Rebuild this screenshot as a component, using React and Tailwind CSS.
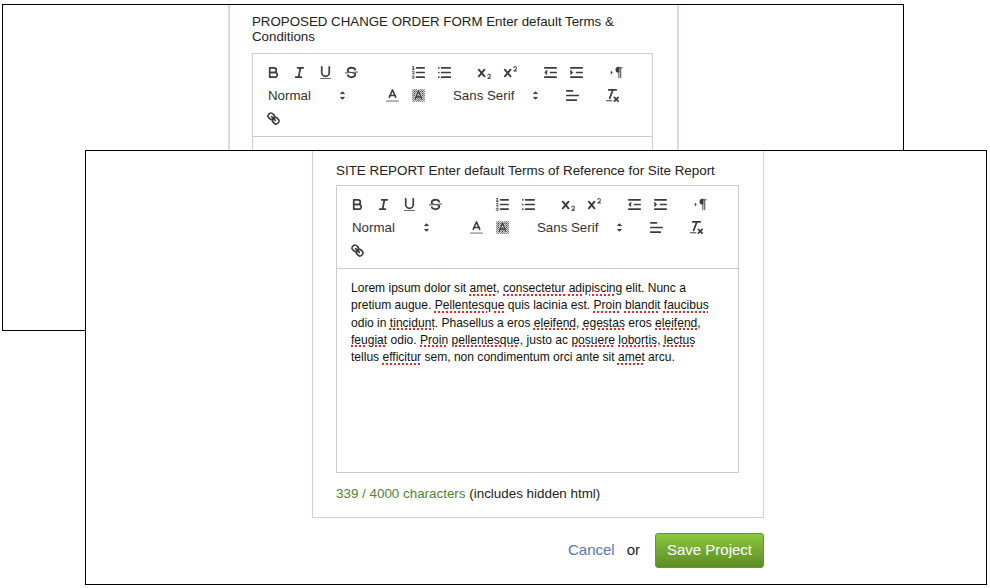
const S = ({ children, className = "" }) => (
  <svg viewBox="0 0 18 18" className={"w-[17px] h-[17px] " + className} fill="none" stroke="#3c3c3c" strokeWidth="1.8" strokeLinecap="round" strokeLinejoin="round">
    {children}
  </svg>
);

const Btn = ({ children, className = "" }) => (
  <span className={"w-[26px] h-[23px] flex items-center justify-center shrink-0 " + className}>{children}</span>
);

const F = { fill: "#3c3c3c", stroke: "none" };
const X = "M9.65,5.241a1,1,0,0,0-1.409.108L6,7.964,3.759,5.349A1,1,0,0,0,2.192,6.59178Q2.21541,6.6213,2.241,6.649L4.684,9.5,2.241,12.35A1,1,0,0,0,3.71,13.70722q0.02557-.02768.049-0.05722L6,11.036,8.241,13.65a1,1,0,1,0,1.567-1.24277Q9.78459,12.3777,9.759,12.35L7.316,9.5,9.759,6.651A1,1,0,0,0,9.65,5.241Z";

const Arrow = () => (
  <svg viewBox="0 0 18 18" className="w-[17px] h-[17px]" fill="#3c3c3c" stroke="#3c3c3c" strokeWidth="1" strokeLinejoin="round">
    <polygon points="7 11 9 13 11 11 7 11" />
    <polygon points="7 7 9 5 11 7 7 7" />
  </svg>
);

const Picker = ({ label, className = "" }) => (
  <span className={"h-[23px] flex items-center justify-between pl-[8px] text-[#333] text-[13.3px] shrink-0 " + className}>
    <span>{label}</span>
    <Arrow />
  </span>
);

function Toolbar({ id }) {
  return (
    <div className="flex flex-wrap content-start h-[83px] pl-[7px] pr-[4px] pt-[7px] border-b border-[#ccc]">
      <Btn><S><path d="M5,4H9.5A2.5,2.5,0,0,1,12,6.5v0A2.5,2.5,0,0,1,9.5,9H5A0,0,0,0,1,5,9V4A0,0,0,0,1,5,4Z" /><path d="M5,9h5.5A2.5,2.5,0,0,1,13,11.5v0A2.5,2.5,0,0,1,10.5,14H5a0,0,0,0,1,0,0V9A0,0,0,0,1,5,9Z" /></S></Btn>
      <Btn><S><line x1="7" x2="13" y1="4" y2="4" /><line x1="5" x2="11" y1="14" y2="14" /><line x1="8" x2="10" y1="14" y2="4" /></S></Btn>
      <Btn><S><path d="M5,3V9a4.012,4.012,0,0,0,4,4H9a4.012,4.012,0,0,0,4-4V3" /><rect {...F} height="1" rx=".5" ry=".5" width="12" x="3" y="15" /></S></Btn>
      <Btn><S><line strokeWidth="1" x1="15.5" x2="2.5" y1="8.5" y2="9.5" /><path {...F} d="M9.007,8C6.542,7.791,6,7.519,6,6.5,6,5.792,7.283,5,9,5c1.571,0,2.765.679,2.969,1.309a1,1,0,0,0,1.9-.617C13.356,4.106,11.354,3,9,3,6.2,3,4,4.538,4,6.5a3.2,3.2,0,0,0,.5,1.843Z" /><path {...F} d="M8.984,10C11.457,10.208,12,10.479,12,11.5c0,.708-1.283,1.5-3,1.5-1.571,0-2.765-.679-2.969-1.309a1,1,0,1,0-1.9.617C4.644,13.894,6.646,15,9,15c2.8,0,5-1.538,5-3.5a3.2,3.2,0,0,0-.5-1.843Z" /></S></Btn>

      <Btn className="ml-[41px]"><S><line x1="7" x2="15" y1="4" y2="4" /><line x1="7" x2="15" y1="9" y2="9" /><line x1="7" x2="15" y1="14" y2="14" /><line strokeWidth="1" x1="2.5" x2="4.5" y1="5.5" y2="5.5" /><path {...F} d="M3.5,6A0.5,0.5,0,0,1,3,5.5V3.085l-0.276.138A0.5,0.5,0,0,1,2.053,3c-0.124-.247-0.023-0.324.224-0.447l1-.5A0.5,0.5,0,0,1,4,2.5v3A0.5,0.5,0,0,1,3.5,6Z" /><path strokeWidth="1" d="M4.5,10.5h-2c0-.234,1.85-1.076,1.85-2.234A0.959,0.959,0,0,0,2.5,8.156" /><path strokeWidth="1" d="M2.5,14.846a0.959,0.959,0,0,0,1.85-.109A0.7,0.7,0,0,0,3.75,14a0.688,0.688,0,0,0,.6-0.736,0.959,0.959,0,0,0-1.85-.109" /></S></Btn>
      <Btn><S><line x1="6" x2="15" y1="4" y2="4" /><line x1="6" x2="15" y1="9" y2="9" /><line x1="6" x2="15" y1="14" y2="14" /><line x1="3" x2="3" y1="4" y2="4" /><line x1="3" x2="3" y1="9" y2="9" /><line x1="3" x2="3" y1="14" y2="14" /></S></Btn>

      <Btn className="ml-[14px]"><S><path {...F} d="M15.5,15H13.861a3.858,3.858,0,0,0,1.914-2.975,1.8,1.8,0,0,0-1.6-1.751A1.921,1.921,0,0,0,12.021,11.7a0.50013,0.50013,0,1,0,.957.291h0a0.914,0.914,0,0,1,1.053-.725,0.81,0.81,0,0,1,.744.762c0,1.076-1.16971,1.86982-1.93971,2.43082A1.45639,1.45639,0,0,0,12,15.5a0.5,0.5,0,0,0,.5.5h3A0.5,0.5,0,0,0,15.5,15Z" /><path {...F} d={X} /></S></Btn>
      <Btn><S><path {...F} d="M15.5,7H13.861a4.015,4.015,0,0,0,1.914-2.975,1.8,1.8,0,0,0-1.6-1.751A1.922,1.922,0,0,0,12.021,3.7a0.5,0.5,0,1,0,.957.291,0.917,0.917,0,0,1,1.053-.725,0.81,0.81,0,0,1,.744.762c0,1.077-1.164,1.925-1.934,2.486A1.423,1.423,0,0,0,12,7.5a0.5,0.5,0,0,0,.5.5h3A0.5,0.5,0,0,0,15.5,7Z" /><path {...F} d={X} /></S></Btn>

      <Btn className="ml-[14px]"><S><line x1="3" x2="15" y1="14" y2="14" /><line x1="3" x2="15" y1="4" y2="4" /><line x1="9" x2="15" y1="9" y2="9" /><polyline fill="#3c3c3c" strokeWidth="1" points="5 7 5 11 3 9 5 7" /></S></Btn>
      <Btn><S><line x1="3" x2="15" y1="14" y2="14" /><line x1="3" x2="15" y1="4" y2="4" /><line x1="9" x2="15" y1="9" y2="9" /><polyline fill="#3c3c3c" strokeWidth="1" points="3 7 3 11 5 9 3 7" /></S></Btn>

      <Btn className="ml-[14px]"><S><polygon {...F} points="3 11 5 9 3 7 3 11" /><line strokeWidth="1" x1="15" x2="11" y1="4" y2="4" /><path {...F} d="M11,3a3,3,0,0,0,0,6h1V3H11Z" /><rect {...F} height="11" width="1" x="11" y="4" /><rect {...F} height="11" width="1" x="13" y="4" /></S></Btn>

      <Picker label="Normal" className="w-[91px]" />
      <Btn className="ml-[28px]"><S><line stroke="#aaa" x1="3" x2="15" y1="15" y2="15" /><polyline strokeWidth="1.6" points="5.5 11 9 3 12.5 11" /><line strokeWidth="1.6" x1="11.63" x2="6.38" y1="9" y2="9" /></S></Btn>
      <Btn><S>
        <defs>
          <pattern id={"dither-" + id} width="2.12" height="2.12" patternUnits="userSpaceOnUse">
            <rect {...F} width="1.06" height="1.06" shapeRendering="crispEdges" />
            <rect {...F} x="1.06" y="1.06" width="1.06" height="1.06" shapeRendering="crispEdges" />
          </pattern>
        </defs>
        <rect x="2.5" y="2.5" width="13" height="13" fill={"url(#dither-" + id + ")"} stroke="none" />
        <polyline stroke="#fff" strokeOpacity="0.6" strokeWidth="3.2" points="5.5 13 9 4 12.5 13" />
        <polyline strokeWidth="1.5" points="5.5 13 9 4 12.5 13" /><line strokeWidth="1.5" x1="11.4" x2="6.6" y1="10.5" y2="10.5" />
      </S></Btn>
      <Picker label="Sans Serif" className="ml-[14px] w-[99px]" />
      <Btn className="ml-[15px]"><S><line x1="3" x2="15" y1="9" y2="9" /><line x1="3" x2="13" y1="14" y2="14" /><line x1="3" x2="9" y1="4" y2="4" /></S></Btn>
      <Btn className="ml-[14px]"><S><line x1="5" x2="13" y1="3" y2="3" /><line x1="6" x2="9.35" y1="12" y2="3" /><line x1="11" x2="15" y1="11" y2="15" /><line x1="15" x2="11" y1="11" y2="15" /><rect {...F} height="1" rx=".5" ry=".5" width="7" x="2" y="14" /></S></Btn>
      <Btn className="mr-[300px]"><S><line x1="7" x2="11" y1="7" y2="11" /><path d="M8.9,4.577a3.476,3.476,0,0,1,.36,4.679A3.476,3.476,0,0,1,4.577,8.9C3.185,7.5,2.035,6.4,4.217,4.217S7.5,3.185,8.9,4.577Z" /><path d="M13.423,9.1a3.476,3.476,0,0,0-4.679-.36,3.476,3.476,0,0,0,.36,4.679c1.392,1.392,2.5,2.542,4.679.36S14.815,10.5,13.423,9.1Z" /></S></Btn>
    </div>
  );
}

const W = ({ children }) => (
  <span className="underline decoration-dotted decoration-[#ff2020] decoration-[1.5px] underline-offset-2">{children}</span>
);

export default function App() {
  return (
    <div className="relative w-[990px] h-[588px] bg-white overflow-hidden font-['Liberation_Sans',Arial,sans-serif] text-[#222]">
      {/* back window */}
      <div className="absolute left-[2px] top-[4px] w-[902px] h-[327px] border border-black bg-white overflow-hidden">
        <div className="ml-[225px] w-[451px] h-[400px] border-x-2 border-[#d6d9ee] pl-[22px] pt-[10px] -mt-[1px]">
          <p className="text-[13.3px] leading-[15px] w-[400px]">PROPOSED CHANGE ORDER FORM Enter default Terms &amp; Conditions</p>
          <div className="mt-[9px] w-[401px] h-[300px] border border-[#ccc]">
            <Toolbar id="a" />
          </div>
        </div>
      </div>

      {/* front window */}
      <div className="absolute left-[85px] top-[150px] w-[902px] h-[435px] border border-black bg-white flex flex-col">
        <div className="ml-[226px] w-[452px] h-[367px] border border-t-0 border-[#c9d1ea] pl-[23px] pt-[12px]">
          <p className="text-[13.4px] leading-[15px]">SITE REPORT Enter default Terms of Reference for Site Report</p>
          <div className="mt-[7px] w-[403px] h-[288px] border border-[#ccc] flex flex-col">
            <Toolbar id="b" />
            <div className="px-[14px] pt-[11px] text-[12.05px] leading-[17.3px] text-[#111]">
              Lorem ipsum dolor sit <W>amet</W>, <W>consectetur</W> <W>adipiscing</W> elit. Nunc a pretium augue. <W>Pellentesque</W> quis lacinia est. <W>Proin</W> <W>blandit</W> <W>faucibus</W> odio in <W>tincidunt</W>. Phasellus a eros <W>eleifend</W>, <W>egestas</W> eros <W>eleifend</W>, <W>feugiat</W> odio. <W>Proin</W> <W>pellentesque</W>, justo ac <W>posuere</W> <W>lobortis</W>, <W>lectus</W> tellus <W>efficitur</W> sem, non condimentum orci ante sit <W>amet</W> arcu.
            </div>
          </div>
          <p className="mt-[13px] text-[13.4px] leading-[15px]">
            <span className="text-[#548235]">339 / 4000 characters</span> (includes hidden html)
          </p>
        </div>
        <div className="ml-[226px] w-[452px] mt-[15px] flex items-center justify-end">
          <a className="text-[#5577bb] text-[15px]">Cancel</a>
          <span className="ml-[12px] text-[15px]">or</span>
          <button className="ml-[15px] w-[109px] h-[35px] rounded-[3px] border border-[#5f9a2a] bg-gradient-to-b from-[#8cc63f] to-[#5c8e24] text-white text-[15px]">Save Project</button>
        </div>
      </div>
    </div>
  );
}
